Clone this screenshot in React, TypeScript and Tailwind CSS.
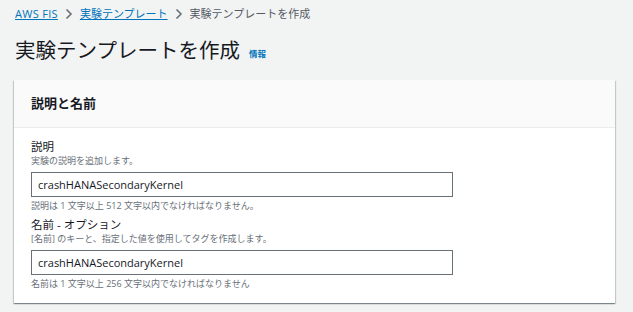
import { useState } from 'react';

const font = { fontFamily: '"Open Sans", "Noto Sans CJK JP", sans-serif' };

const Chevron = () => (
  <svg width="8" height="12" viewBox="0 0 8 12" className="mx-[7px]">
    <path d="M1.5 1.5 L6 6 L1.5 10.5" fill="none" stroke="#687078" strokeWidth="1.6" />
  </svg>
);

const Field = ({
  label,
  description,
  constraint,
  value,
  onChange,
}: {
  label: string;
  description: string;
  constraint: string;
  value: string;
  onChange: (v: string) => void;
}) => (
  <div className="flex flex-col">
    <label className="text-[11.5px] leading-[16px] text-[#16191f]">{label}</label>
    <p className="text-[9px] leading-[12px] text-[#687078]">{description}</p>
    <input
      type="text"
      value={value}
      onChange={(e) => onChange(e.target.value)}
      className="mt-[5px] w-[422px] h-[25px] px-[6px] border border-[#687078] bg-white text-[11px] text-[#16191f] outline-none"
      style={font}
    />
    <p className="mt-[3px] text-[9px] leading-[12px] text-[#687078]">{constraint}</p>
  </div>
);

export default function App() {
  const [description, setDescription] = useState('crashHANASecondaryKernel');
  const [name, setName] = useState('crashHANASecondaryKernel');

  return (
    <div className="w-full h-[312px] bg-[#f2f3f3] px-[14px] overflow-hidden" style={font}>
      {/* Breadcrumb */}
      <nav className="flex items-center pt-[7px] h-[21px] text-[11px] leading-[14px] pl-[1px]">
        <a className="text-[#0073bb] underline tracking-[0.3px]">AWS FIS</a>
        <Chevron />
        <a className="text-[#0073bb] underline">実験テンプレート</a>
        <Chevron />
        <span className="text-[#545b64]">実験テンプレートを作成</span>
      </nav>

      {/* Title */}
      <div className="flex items-end mt-[15px] pl-[1px]">
        <h1 className="text-[20.5px] leading-[28px] font-normal text-[#16191f]">実験テンプレートを作成</h1>
        <a className="ml-[9px] mb-[4px] text-[8.5px] leading-[12px] font-bold text-[#0073bb]">情報</a>
      </div>

      {/* Card */}
      <div className="mt-[16px] w-[601px] bg-white shadow-[0_1px_1px_0_rgba(0,28,36,0.3),1px_1px_1px_0_rgba(0,28,36,0.15),-1px_1px_1px_0_rgba(0,28,36,0.15)]">
        <div className="h-[48px] flex items-center px-[17px] bg-[#fafafa] border-b border-[#eaeded]">
          <h2 className="text-[13px] font-bold text-[#16191f]">説明と名前</h2>
        </div>
        <div className="flex flex-col gap-[5px] px-[17px] pt-[11px] pb-[13px]">
          <Field
            label="説明"
            description="実験の説明を追加します。"
            constraint="説明は 1 文字以上 512 文字以内でなければなりません。"
            value={description}
            onChange={setDescription}
          />
          <Field
            label="名前 - オプション"
            description="[名前] のキーと、指定した値を使用してタグを作成します。"
            constraint="名前は 1 文字以上 256 文字以内でなければなりません"
            value={name}
            onChange={setName}
          />
        </div>
      </div>
    </div>
  );
}
